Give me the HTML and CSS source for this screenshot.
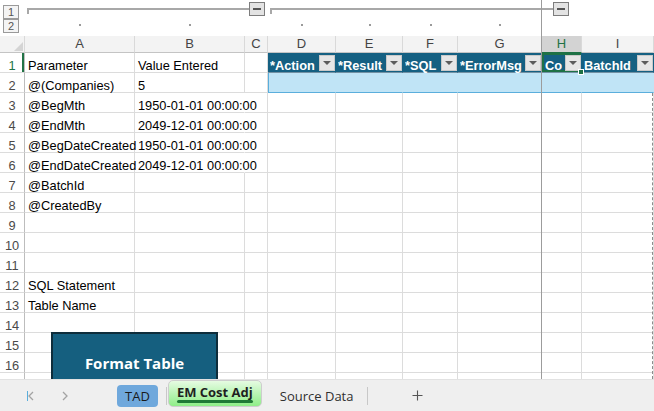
FILE: index.html
```html
<!DOCTYPE html>
<html>
<head>
    <title>EM Cost Adj</title>
    <link rel="stylesheet" href="styles.css">
</head>
<body>
<div class="app">
    <!-- outline (grouping) bar -->
    <div class="outline">
        <div class="levels"><span class="lvl">1</span><span class="lvl">2</span></div>
        <div class="group g1"><span class="bar"></span><span class="minus"></span></div>
        <div class="group g2"><span class="bar"></span><span class="minus"></span></div>
        <span class="dot col-a"></span>
        <span class="dot col-b"></span>
        <span class="dot col-d"></span>
        <span class="dot col-e"></span>
        <span class="dot col-f"></span>
        <span class="dot col-g"></span>
    </div>

    <!-- column letters -->
    <div class="colhead">
        <div class="corner"><svg width="9" height="9" viewBox="0 0 9 9"><polygon points="9,0 9,9 0,9" fill="#d4d4d4"/></svg></div>
        <div class="ch">A</div>
        <div class="ch">B</div>
        <div class="ch">C</div>
        <div class="ch">D</div>
        <div class="ch">E</div>
        <div class="ch">F</div>
        <div class="ch">G</div>
        <div class="ch sel">H</div>
        <div class="ch">I</div>
    </div>

    <div class="grid">
        <!-- row 1 -->
        <div class="rh on">1</div>
        <div class="c">Parameter</div>
        <div class="c">Value Entered</div>
        <div class="c"></div>
        <div class="c th first"><span class="tt">*Action</span><span class="fb"></span></div>
        <div class="c th"><span class="tt">*Result</span><span class="fb"></span></div>
        <div class="c th"><span class="tt">*SQL</span><span class="fb"></span></div>
        <div class="c th"><span class="tt">*ErrorMsg</span><span class="fb"></span></div>
        <div class="c th active"><span class="tt">Co</span><span class="fb"></span></div>
        <div class="c th"><span class="tt">BatchId</span><span class="fb"></span></div>

        <!-- row 2 -->
        <div class="rh">2</div>
        <div class="c">@(Companies)</div>
        <div class="c">5</div>
        <div class="c"></div>
        <div class="c tb first"></div>
        <div class="c tb"></div>
        <div class="c tb"></div>
        <div class="c tb"></div>
        <div class="c tb"></div>
        <div class="c tb"></div>

        <div class="rh">3</div>
        <div class="c">@BegMth</div>
        <div class="c spill">1950-01-01 00:00:00</div>
        <div class="c"></div><div class="c"></div><div class="c"></div><div class="c"></div><div class="c"></div><div class="c"></div><div class="c"></div>

        <div class="rh">4</div>
        <div class="c">@EndMth</div>
        <div class="c spill">2049-12-01 00:00:00</div>
        <div class="c"></div><div class="c"></div><div class="c"></div><div class="c"></div><div class="c"></div><div class="c"></div><div class="c"></div>

        <div class="rh">5</div>
        <div class="c">@BegDateCreated</div>
        <div class="c spill">1950-01-01 00:00:00</div>
        <div class="c"></div><div class="c"></div><div class="c"></div><div class="c"></div><div class="c"></div><div class="c"></div><div class="c"></div>

        <div class="rh">6</div>
        <div class="c">@EndDateCreated</div>
        <div class="c spill">2049-12-01 00:00:00</div>
        <div class="c"></div><div class="c"></div><div class="c"></div><div class="c"></div><div class="c"></div><div class="c"></div><div class="c"></div>

        <div class="rh">7</div>
        <div class="c">@BatchId</div>
        <div class="c"></div><div class="c"></div><div class="c"></div><div class="c"></div><div class="c"></div><div class="c"></div><div class="c"></div><div class="c"></div>

        <div class="rh">8</div>
        <div class="c">@CreatedBy</div>
        <div class="c"></div><div class="c"></div><div class="c"></div><div class="c"></div><div class="c"></div><div class="c"></div><div class="c"></div><div class="c"></div>

        <div class="rh">9</div>
        <div class="c"></div><div class="c"></div><div class="c"></div><div class="c"></div><div class="c"></div><div class="c"></div><div class="c"></div><div class="c"></div><div class="c"></div>

        <div class="rh">10</div>
        <div class="c"></div><div class="c"></div><div class="c"></div><div class="c"></div><div class="c"></div><div class="c"></div><div class="c"></div><div class="c"></div><div class="c"></div>

        <div class="rh">11</div>
        <div class="c"></div><div class="c"></div><div class="c"></div><div class="c"></div><div class="c"></div><div class="c"></div><div class="c"></div><div class="c"></div><div class="c"></div>

        <div class="rh">12</div>
        <div class="c">SQL Statement</div>
        <div class="c"></div><div class="c"></div><div class="c"></div><div class="c"></div><div class="c"></div><div class="c"></div><div class="c"></div><div class="c"></div>

        <div class="rh">13</div>
        <div class="c">Table Name</div>
        <div class="c"></div><div class="c"></div><div class="c"></div><div class="c"></div><div class="c"></div><div class="c"></div><div class="c"></div><div class="c"></div>

        <div class="rh">14</div>
        <div class="c"></div><div class="c"></div><div class="c"></div><div class="c"></div><div class="c"></div><div class="c"></div><div class="c"></div><div class="c"></div><div class="c"></div>

        <div class="rh">15</div>
        <div class="c"></div><div class="c"></div><div class="c"></div><div class="c"></div><div class="c"></div><div class="c"></div><div class="c"></div><div class="c"></div><div class="c"></div>

        <div class="rh">16</div>
        <div class="c"></div><div class="c"></div><div class="c"></div><div class="c"></div><div class="c"></div><div class="c"></div><div class="c"></div><div class="c"></div><div class="c"></div>

        <!-- row 17, only its top edge shows -->
        <div class="rh"></div>
        <div class="c"></div><div class="c"></div><div class="c"></div><div class="c"></div><div class="c"></div><div class="c"></div><div class="c"></div><div class="c"></div><div class="c"></div>

        <!-- floating shape -->
        <div class="shape">Format Table</div>
    </div>

    <!-- sheet tabs -->
    <div class="tabs">
        <svg class="nav first" width="8" height="10" viewBox="0 0 8 10"><polyline points="6,1 2,5 6,9" fill="none" stroke="#a3a3a3" stroke-width="1.3"/></svg>
        <svg class="nav" width="8" height="10" viewBox="0 0 8 10"><polyline points="2,1 6,5 2,9" fill="none" stroke="#a3a3a3" stroke-width="1.3"/></svg>
        <div class="tab tad">TAD</div>
        <span class="sep"></span>
        <div class="tab current">EM Cost Adj</div>
        <div class="tab plain">Source Data</div>
        <span class="sep wide"></span>
        <svg class="plus" width="11" height="11" viewBox="0 0 11 11"><path d="M5.5 0.5v10M0.5 5.5h10" stroke="#555" stroke-width="1.1"/></svg>
    </div>

    <div class="freeze"></div>
    <div class="pagebreak"></div>
</div>
</body>
</html>
```

FILE: styles.css
```css
:root {
    --cols: 25px 110px 110px 23px 68px 67px 55px 84px 40px 72px;
}

body {
    margin: 0;
    background: #fff;
    font-family: "Liberation Sans", Arial, sans-serif;
    overflow: hidden;
}

.app {
    position: relative;
    width: 654px;
    height: 411px;
    display: flex;
    flex-direction: column;
    overflow: hidden;
}

/* outline (grouping) bar */
.outline {
    display: grid;
    grid-template-columns: var(--cols);
    grid-template-rows: 19px 17px;
    height: 36px;
}

.levels {
    grid-column: 1;
    grid-row: 1 / 3;
    display: flex;
    flex-direction: column;
    padding: 5px 0 0 3px;
}

.lvl {
    width: 14px;
    height: 12px;
    border: 1px solid #9a9a9a;
    background: #f4f4f4;
    color: #555;
    font-size: 11px;
    line-height: 12px;
    text-align: center;
}

.group {
    grid-row: 1;
    display: flex;
    align-items: flex-start;
    padding-top: 2px;
}

.g1 {
    grid-column: 2 / 5;
    padding-right: 3px;
}

.g2 {
    grid-column: 5 / 10;
    padding-right: 13px;
}

.bar {
    flex: 1;
    margin: 6px 0 0 2px;
    height: 4px;
    border-top: 2px solid #a8a8a8;
    border-left: 2px solid #a8a8a8;
}

.minus {
    position: relative;
    width: 14px;
    height: 12px;
    border: 1px solid #7d7d7d;
    background: #e3e3e3;
}

.minus::after {
    content: "";
    position: absolute;
    left: 3px;
    top: 5px;
    width: 8px;
    height: 2px;
    background: #555;
}

.dot {
    grid-row: 2;
    justify-self: center;
    width: 2px;
    height: 2px;
    margin-top: 5px;
    background: #9a9a9a;
}

.col-a { grid-column: 2; }
.col-b { grid-column: 3; }
.col-d { grid-column: 5; }
.col-e { grid-column: 6; }
.col-f { grid-column: 7; }
.col-g { grid-column: 8; }

/* column letters */
.colhead {
    display: grid;
    grid-template-columns: var(--cols);
    height: 17px;
    background: #f3f3f3;
}

.colhead > div {
    box-sizing: border-box;
    border-right: 1px solid #d9d9d9;
    border-bottom: 1px solid #c4c4c4;
}

.corner {
    display: flex;
    align-items: flex-end;
    justify-content: flex-end;
    padding: 0 1px 1px 0;
}

.corner svg {
    display: block;
}

.ch {
    text-align: center;
    color: #444;
    font-size: 13px;
    line-height: 16px;
}

.ch.sel {
    background: #d3d3d3;
    color: #1e7145;
    border-bottom: 1px solid #1e7145;
}

/* cells */
.grid {
    position: relative;
    display: grid;
    grid-template-columns: var(--cols);
    grid-auto-rows: 20px;
    height: 326px;
    overflow: hidden;
}

.c, .rh {
    box-sizing: border-box;
    border-right: 1px solid #dcdcdc;
    border-bottom: 1px solid #dcdcdc;
    padding: 5px 0 0 3px;
    font-size: 12.8px;
    line-height: 15px;
    color: #000;
    white-space: nowrap;
}

.rh {
    padding-left: 0;
    text-align: center;
    color: #4a4a4a;
    border-right-color: #bdbdbd;
}

.rh.on {
    color: #217346;
    box-shadow: inset -2px 0 0 #217346;
}

.spill {
    border-right-color: transparent;
}

/* table header row */
.th {
    display: flex;
    align-items: flex-start;
    padding: 0 0 0 2px;
    background: #156082;
    border-right-color: #156082;
    border-bottom-color: #7391a4;
    color: #fff;
    font-weight: bold;
}

.tt {
    flex: 1;
    padding-top: 5px;
    overflow: hidden;
}

.fb {
    position: relative;
    align-self: center;
    width: 14px;
    height: 14px;
    border: 1px solid #c9c9c9;
    background: #e6e6e6;
}

.fb::after {
    content: "";
    position: absolute;
    left: 3px;
    top: 5px;
    border-left: 4px solid transparent;
    border-right: 4px solid transparent;
    border-top: 4px solid #5c5c5c;
}

.first {
    box-shadow: inset 1px 0 0 #5aaedc;
}

.th.first {
    box-shadow: none;
}

.active {
    position: relative;
    z-index: 1;
    box-shadow: inset 0 0 0 2px #1e7145;
    padding-left: 3px;
}

.active::after {
    content: "";
    position: absolute;
    right: -3px;
    bottom: -3px;
    width: 4px;
    height: 4px;
    background: #1e7145;
    border: 1px solid #fff;
}

/* table body row */
.tb {
    background: #c0e4f6;
    border-right-color: #c0e4f6;
    border-bottom-color: #5aaedc;
}

/* shape */
.shape {
    position: absolute;
    left: 51px;
    top: 279px;
    width: 163px;
    height: 90px;
    box-sizing: content-box;
    padding-top: 19px;
    background: #155f7f;
    border: 2px solid #0e2d3b;
    color: #fff;
    font-family: "Open Sans", sans-serif;
    font-weight: bold;
    font-size: 15px;
    line-height: 20px;
    text-align: center;
}

/* sheet tabs */
.tabs {
    display: flex;
    align-items: center;
    height: 32px;
    box-sizing: border-box;
    border-top: 1px solid #e2e2e2;
    background: #efefef;
    font-family: "Open Sans", sans-serif;
    font-size: 13px;
    color: #262626;
}

.nav {
    display: block;
    margin-left: 26px;
}

.nav.first {
    margin-left: 27px;
}

.tab {
    white-space: nowrap;
}

.tad {
    margin-left: 48px;
    height: 22px;
    line-height: 22px;
    padding: 0 8px;
    border-radius: 4px;
    background: #6fa8dc;
    color: #1a1a1a;
}

.sep {
    width: 1px;
    height: 18px;
    margin-left: 8px;
    background: #c8c8c8;
}

.sep.wide {
    margin-left: 14px;
}

.current {
    position: relative;
    align-self: flex-start;
    margin-left: 1px;
    width: 94px;
    height: 27px;
    box-sizing: border-box;
    padding-top: 2px;
    border: 1px solid #cdcdcd;
    border-radius: 5px;
    background: linear-gradient(#e6fbe2, #8eee88);
    font-weight: bold;
    text-align: center;
    line-height: 18px;
    color: #1f1f1f;
}

.current::after {
    content: "";
    position: absolute;
    left: 8px;
    right: 8px;
    bottom: 3px;
    height: 3px;
    border-radius: 2px;
    background: #1f7a36;
}

.plain {
    margin-left: 18px;
    color: #303030;
}

.plus {
    display: block;
    margin-left: 44px;
}

/* overlays */
.freeze {
    position: absolute;
    left: 541px;
    top: 0;
    width: 1px;
    height: 379px;
    background: #9c9c9c;
}

.pagebreak {
    position: absolute;
    left: 652px;
    top: 93px;
    height: 286px;
    border-left: 1px dashed #8c8c8c;
}
```
